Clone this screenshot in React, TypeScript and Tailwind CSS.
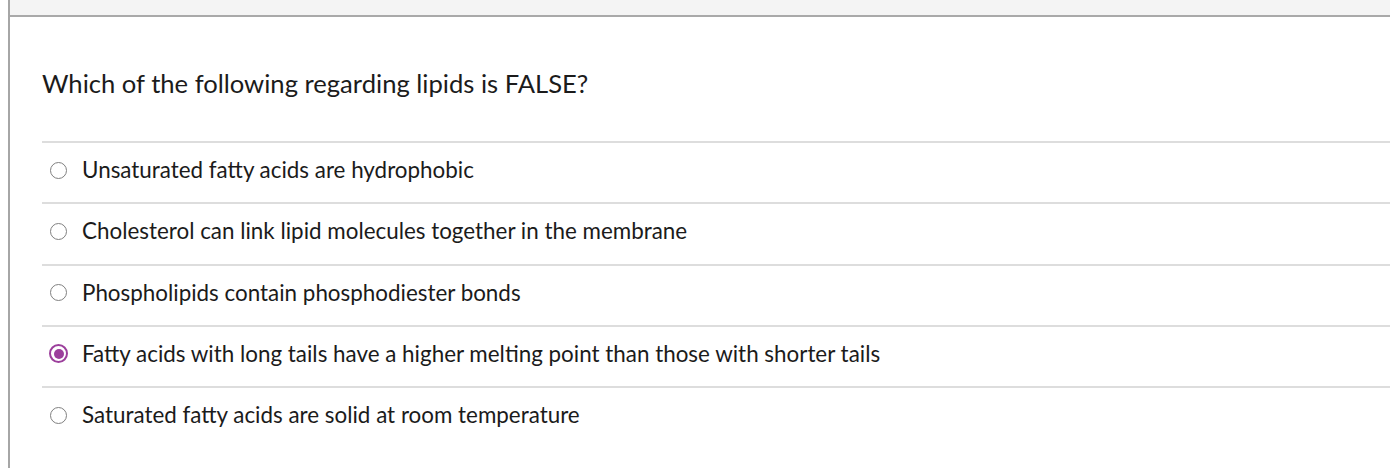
import { useState } from "react";

const answers = [
  "Unsaturated fatty acids are hydrophobic",
  "Cholesterol can link lipid molecules together in the membrane",
  "Phospholipids contain phosphodiester bonds",
  "Fatty acids with long tails have a higher melting point than those with shorter tails",
  "Saturated fatty acids are solid at room temperature",
];

export default function App() {
  const [selected, setSelected] = useState(3);

  return (
    <div className="min-h-[468px] bg-white pl-2 font-['Lato','Liberation_Sans',sans-serif] text-[#1b1b1b]">
      <div className="min-h-[468px] border-l-2 border-[#a6a6a6]">
        <div className="h-[17px] border-b-2 border-[#a9a9a9] bg-[#f4f4f4]" />
        <div className="pl-8">
          <p className="pt-[50px] text-[25.6px] leading-[32px]">Which of the following regarding lipids is FALSE?</p>
          <ul className="mt-[42px]">
            {answers.map((a, i) => (
              <li key={i} className="border-t-2 border-[#dddddd]">
                <label
                  className="flex h-[59.25px] cursor-pointer items-center pb-[5px] pl-[8px]"
                  onClick={() => setSelected(i)}
                >
                  <span className="flex w-[32px] shrink-0 items-center">
                    {i === selected ? (
                      <span className="-ml-[1px] flex h-[19px] w-[19px] shrink-0 items-center justify-center rounded-full border-2 border-[#9c3f9c]">
                        <span className="block h-[10px] w-[10px] rounded-full bg-[#9c3f9c]" />
                      </span>
                    ) : (
                      <span className="block h-[17px] w-[17px] shrink-0 rounded-full border-[1.5px] border-[#808080]" />
                    )}
                  </span>
                  <span className="text-[22.4px] leading-[28px]">{a}</span>
                </label>
              </li>
            ))}
          </ul>
        </div>
      </div>
    </div>
  );
}
